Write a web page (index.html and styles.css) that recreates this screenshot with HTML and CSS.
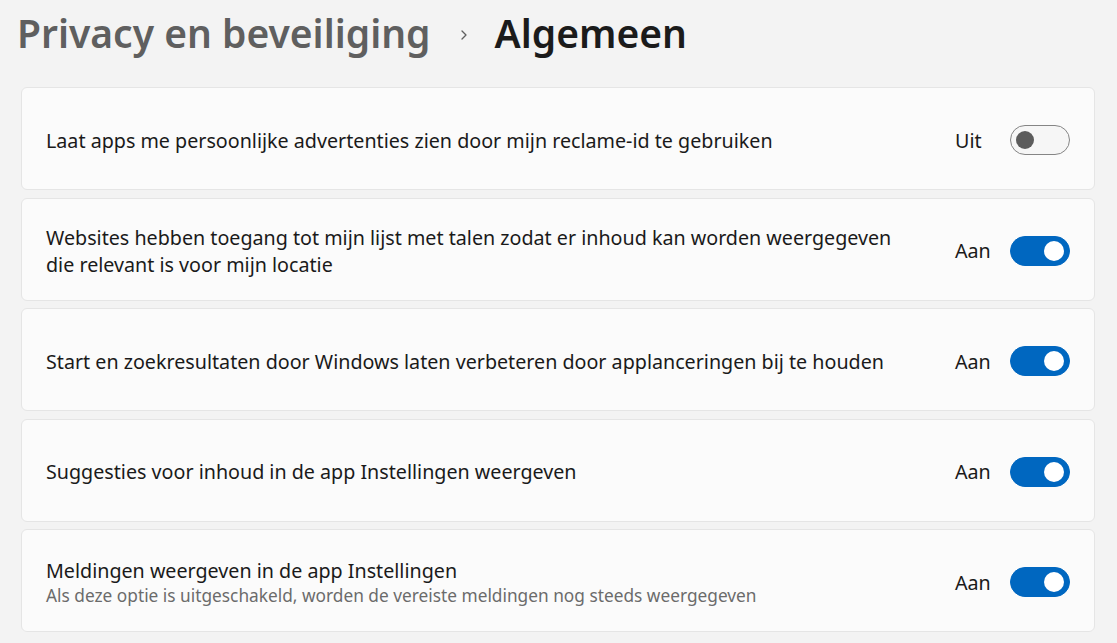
FILE: index.html
```html
<!DOCTYPE html>
<html lang="nl">
<head>
    <meta charset="UTF-8">
    <meta name="viewport" content="width=device-width, initial-scale=1.0">
    <title>Privacy en beveiliging - Algemeen</title>
    <link rel="stylesheet" href="styles.css">
</head>
<body>
    <div id="page">
        <h1 class="crumb">
            <span class="parent">Privacy en beveiliging</span>
            <span class="chev">
                <svg width="16" height="16" viewBox="0 0 16 16"><path d="M6 4 L10 8 L6 12" fill="none" stroke="#5f5f5f" stroke-width="1.3" stroke-linecap="round" stroke-linejoin="round"/></svg>
            </span>
            <span class="current">Algemeen</span>
        </h1>

        <div class="list">
            <div class="card">
                <div class="label">Laat apps me persoonlijke advertenties zien door mijn reclame-id te gebruiken</div>
                <div class="state">Uit</div>
                <span class="toggle"></span>
            </div>
            <div class="card">
                <div class="label">Websites hebben toegang tot mijn lijst met talen zodat er inhoud kan worden weergegeven die relevant is voor mijn locatie</div>
                <div class="state">Aan</div>
                <span class="toggle on"></span>
            </div>
            <div class="card">
                <div class="label">Start en zoekresultaten door Windows laten verbeteren door applanceringen bij te houden</div>
                <div class="state">Aan</div>
                <span class="toggle on"></span>
            </div>
            <div class="card">
                <div class="label">Suggesties voor inhoud in de app Instellingen weergeven</div>
                <div class="state">Aan</div>
                <span class="toggle on"></span>
            </div>
            <div class="card">
                <div class="label">Meldingen weergeven in de app Instellingen
                    <small>Als deze optie is uitgeschakeld, worden de vereiste meldingen nog steeds weergegeven</small>
                </div>
                <div class="state">Aan</div>
                <span class="toggle on"></span>
            </div>
        </div>
    </div>
</body>
</html>
```

FILE: styles.css
```css
body {
    margin: 0;
    background-color: #f3f3f3;
    font-family: "Noto Sans", "Open Sans", sans-serif;
    color: #1a1a1a;
}
#page {
    padding: 7px 22px 0 21px;
}

/* kruimelpad */
.crumb {
    display: flex;
    align-items: center;
    margin: 0 0 28px 0;
    font-size: 39px;
    font-weight: 600;
    line-height: 52px;
}
.crumb .parent {color: #5f5f5f; margin-left: -4px;}
.crumb .chev {display: flex; margin: 4px 22px 0 26px;}
.crumb .current {color: #1b1b1b;}

/* kaarten */
.list {
    display: flex;
    flex-direction: column;
    gap: 7.5px;
}
.card {
    display: flex;
    align-items: center;
    height: 103px;
    box-sizing: border-box;
    padding: 3px 24px 0 24px;
    background-color: #fbfbfb;
    border: 1px solid #e5e5e5;
    border-radius: 6px;
}
.label {
    flex: 1;
    font-size: 19.7px;
    line-height: 27px;
    padding-right: 40px;
}
.label small {
    display: block;
    font-size: 17.3px;
    line-height: 23px;
    color: #6b6b6b;
}
.state {
    width: 36px;
    font-size: 19.7px;
    margin-right: 19px;
}

/* schakelaar */
.toggle {
    position: relative;
    width: 60px;
    height: 30px;
    box-sizing: border-box;
    border: 1px solid #858585;
    border-radius: 15px;
    background-color: #f6f6f6;
}
.toggle::after {
    content: "";
    position: absolute;
    left: 5px;
    top: 5px;
    width: 18px;
    height: 18px;
    border-radius: 50%;
    background-color: #5c5c5c;
}
.toggle.on {
    border-color: #0067c0;
    background-color: #0067c0;
}
.toggle.on::after {
    left: 33px;
    top: 4px;
    width: 20px;
    height: 20px;
    background-color: #fff;
}
```
